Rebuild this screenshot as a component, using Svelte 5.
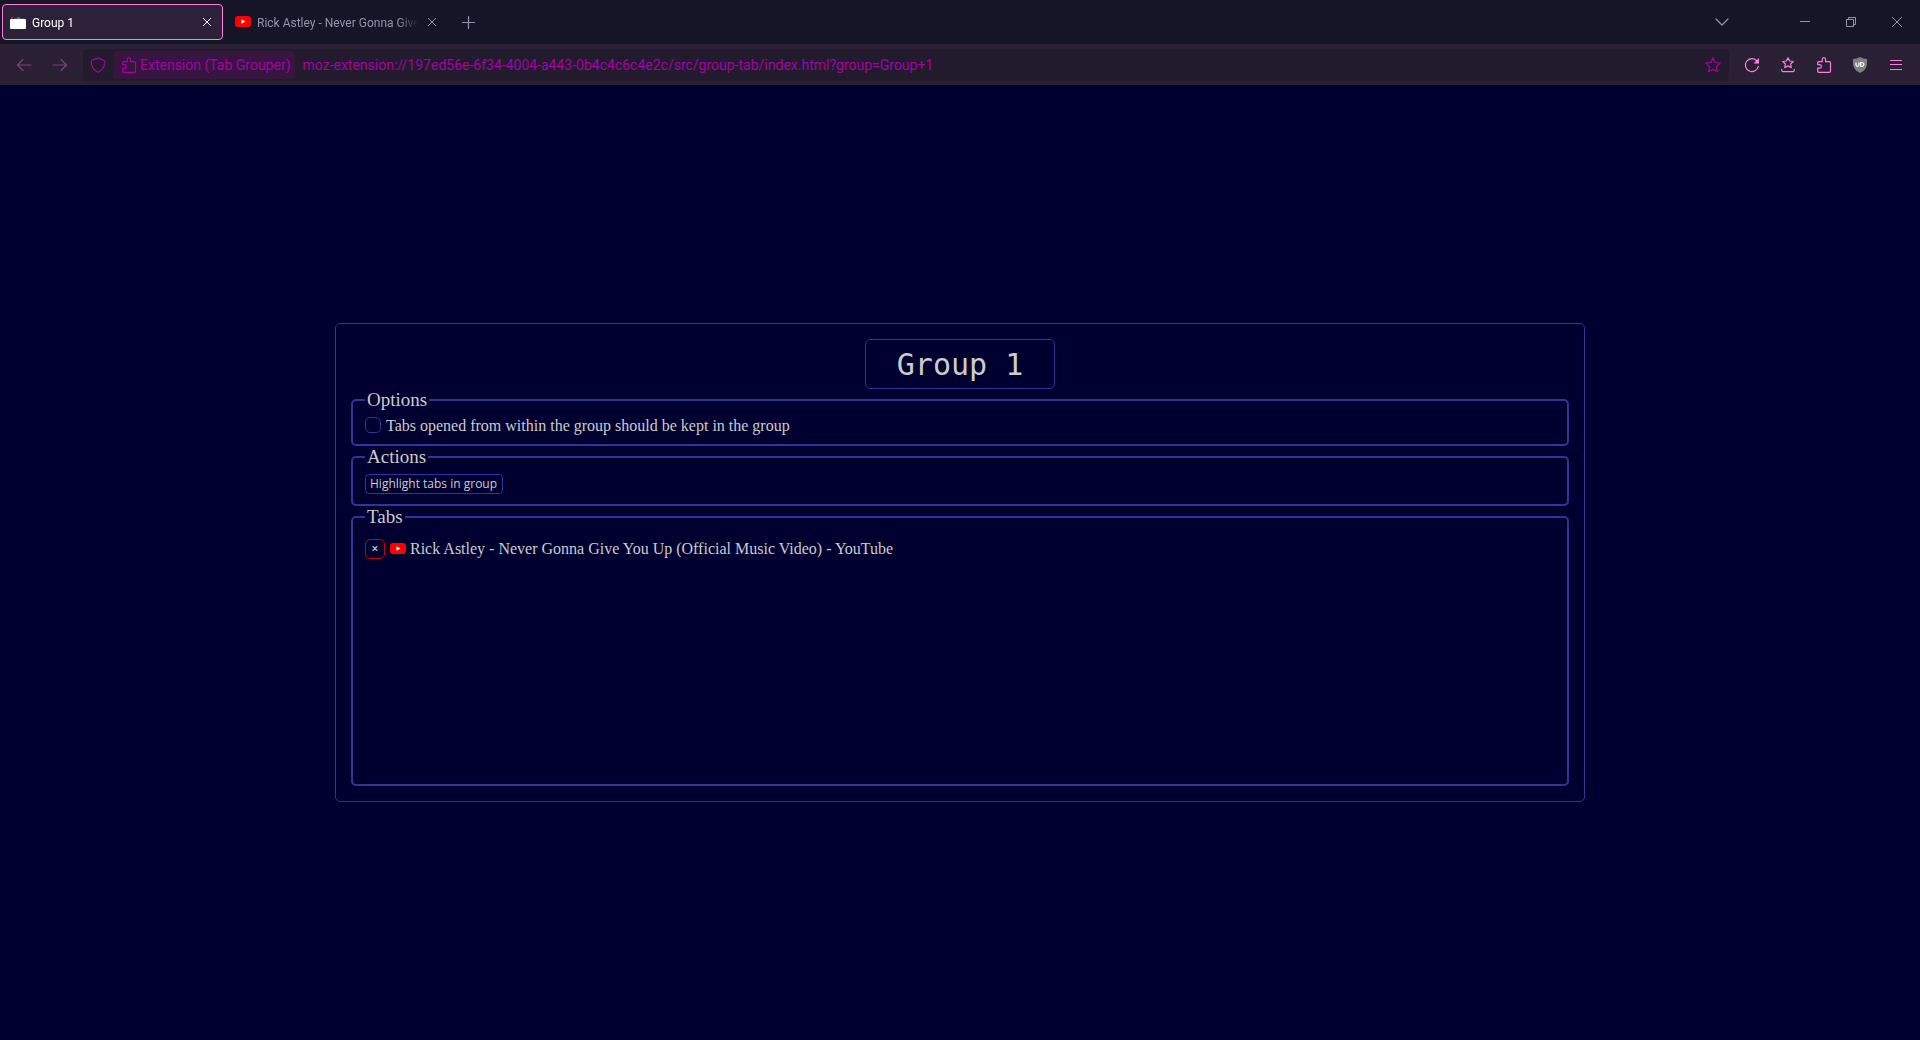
<script>
  let groupName = $state('Group 1');
  let keepOpened = $state(false);

  const browserTabs = [
    { title: 'Group 1', icon: 'folder', active: true },
    { title: 'Rick Astley - Never Gonna Give You Up', icon: 'youtube', active: false }
  ];
  const groupTabs = ['Rick Astley - Never Gonna Give You Up (Official Music Video) - YouTube'];
</script>

{#snippet youtube()}
  <svg class="icon" viewBox="0 0 16 16" aria-hidden="true">
    <rect x="0" y="2" width="16" height="11" rx="3" fill="#f00" />
    <path d="M6.5 5.2 10.5 7.5 6.5 9.8z" fill="#fff" />
  </svg>
{/snippet}

{#snippet puzzle()}
  <svg class="icon line" viewBox="0 0 16 16" aria-hidden="true">
    <path d="M1.7 11.200V14q0 1.3 1.3 1.3h10.2q1.3 0 1.3-1.3V6q0-1.3-1.3-1.3H9.6V2.600a1.7 1.9 0 0 0-3.400 0v2.100H3q-1.3 0-1.3 1.3v1.600h1.9a1.8 1.8 0 0 1 0 3.600z" />
  </svg>
{/snippet}

<div class="window">
  <header>
    <div class="tabbar">
      {#each browserTabs as tab}
        <div class="tab" class:active={tab.active}>
          {#if tab.icon === 'folder'}
            <svg class="icon" viewBox="0 0 16 16" aria-hidden="true">
              <path d="M0 3h4v3H0z" fill="#3c1424" />
              <path d="M1 3h2v2H1z" fill="#d01818" />
              <path d="M4 4h3v2H4zM10 4h5v2h-5z" fill="#3f4352" />
              <path d="M7 3h3v3H7z" fill="#1877c0" />
              <rect y="5" width="16" height="10" rx="1" fill="#fff" />
            </svg>
          {:else}
            {@render youtube()}
          {/if}
          <span class="tab-title">{tab.title}</span>
          <button class="tab-close" aria-label="Close tab">
            <svg viewBox="0 0 10 10" aria-hidden="true"><path d="M1 1l8 8M9 1 1 9" /></svg>
          </button>
        </div>
      {/each}
      <button class="tool dim" aria-label="New tab">
        <svg class="icon line" viewBox="0 0 16 16" aria-hidden="true"><path d="M8.500 2.500v12M2.500 8.500h12" /></svg>
      </button>
      <div class="spacer"></div>
      <button class="tool dim" aria-label="List all tabs">
        <svg class="icon line" viewBox="0 0 16 16" aria-hidden="true"><path d="M2 5l6 6 6-6" /></svg>
      </button>
      <div class="controls">
        <button aria-label="Minimize">
          <svg viewBox="0 0 10 10" aria-hidden="true"><path d="M0 4.5h10" /></svg>
        </button>
        <button aria-label="Restore">
          <svg viewBox="0 0 10 10" aria-hidden="true"><path d="M.5 2.5h7v7h-7zM2.5 2.5v-2h7v7h-2" /></svg>
        </button>
        <button aria-label="Close window">
          <svg viewBox="0 0 10 10" aria-hidden="true"><path d="M0 0l10 10M10 0 0 10" /></svg>
        </button>
      </div>
    </div>

    <nav class="toolbar" aria-label="Browser toolbar">
      <button class="tool faded" aria-label="Back">
        <svg class="icon line" viewBox="0 0 16 16" aria-hidden="true"><path d="M15 8H1.5M7 2.5 1.5 8 7 13.5" /></svg>
      </button>
      <button class="tool faded" aria-label="Forward">
        <svg class="icon line" viewBox="0 0 16 16" aria-hidden="true"><path d="M1 8h13.500M9 2.500 14.500 8 9 13.500" /></svg>
      </button>
      <div class="urlbar">
        <button class="shield" aria-label="Tracking protection">
          <svg class="icon line" viewBox="0 0 16 16" aria-hidden="true">
            <path d="M8 .9 14 3.200q.8.300.8 1.200C14.800 9.500 12.500 13 8 15.300 3.500 13 1.200 9.500 1.200 4.400q0-.9.8-1.200z" />
          </svg>
        </button>
        <button class="identity">
          {@render puzzle()}
          <span>Extension (Tab Grouper)</span>
        </button>
        <input
          class="address"
          aria-label="Address"
          spellcheck="false"
          value="moz-extension://197ed56e-6f34-4004-a443-0b4c4c6c4e2c/src/group-tab/index.html?group=Group+1"
        />
        <button class="tool bookmark" aria-label="Bookmark this page">
          <svg class="icon line" viewBox="0 0 16 16" aria-hidden="true">
            <path d="M8 .9l2.100 4.600 5.100.6-3.700 3.500.9 5.200L8 12.400l-4.400 2.400.9-5.200L.8 6.100l5.100-.6z" />
          </svg>
        </button>
      </div>
      <button class="tool" aria-label="Reload">
        <svg class="icon line" viewBox="0 0 16 16" aria-hidden="true">
          <path d="M14.300 9.300a6.500 6.500 0 1 1-1.500-5.500" />
          <path d="M15 1v5.500H9.500z" fill="currentColor" stroke="none" />
        </svg>
      </button>
      <button class="tool" aria-label="Bookmarks menu">
        <svg class="icon line" viewBox="0 0 16 16" aria-hidden="true">
          <path d="M8 .8l1.600 3.200 3.600.5-2.600 2.500.7 3.600L8 8.900l-3.300 1.700.7-3.600-2.600-2.500 3.600-.5z" />
          <path d="M1.700 12.300v.8q0 1.500 1.500 1.500h9.600q1.500 0 1.500-1.500v-.8" />
        </svg>
      </button>
      <button class="tool" aria-label="Extensions">{@render puzzle()}</button>
      <button class="tool" aria-label="uBlock Origin">
        <svg class="icon" viewBox="0 0 16 16" aria-hidden="true">
          <path d="M8 0q3 2 7 2v4q0 7-7 10Q1 13 1 6V2q4 0 7-2z" fill="#808080" />
          <path d="M4 5.500v2.300q0 1.500 1.500 1.500T7 7.800V5.500M8.700 5.500v3.800h.8q2.300 0 2.300-1.900T9.500 5.500z" fill="none" stroke="#fff" stroke-width="1.200" />
        </svg>
      </button>
      <button class="tool" aria-label="Application menu">
        <svg class="icon line" viewBox="0 0 16 16" aria-hidden="true"><path d="M2.500 3.500h11M2.500 7.500h11M2.500 12.500h11" /></svg>
      </button>
    </nav>
  </header>

  <main>
    <section class="panel">
      <input class="group-name" aria-label="Group name" bind:value={groupName} spellcheck="false" />

      <fieldset>
        <legend>Options</legend>
        <label class="option">
          <input type="checkbox" bind:checked={keepOpened} />
          <span>Tabs opened from within the group should be kept in the group</span>
        </label>
      </fieldset>

      <fieldset>
        <legend>Actions</legend>
        <button class="action">Highlight tabs in group</button>
      </fieldset>

      <fieldset class="tabs">
        <legend>Tabs</legend>
        <ul>
          {#each groupTabs as title}
            <li>
              <button class="remove" aria-label="Close {title}">×</button>
              {@render youtube()}
              <span>{title}</span>
            </li>
          {/each}
        </ul>
      </fieldset>
    </section>
  </main>
</div>

<style>
  :global(body) {
    margin: 0;
    background: #000030;
  }

  .window {
    display: flex;
    flex-direction: column;
    min-height: 100vh;
    color: #ccc;
    font-family: 'Liberation Serif', serif;
    font-size: 16px;
  }

  header,
  header button,
  header input {
    font-family: Roboto, 'Noto Sans', sans-serif;
  }

  button,
  input {
    box-sizing: border-box;
    margin: 0;
    padding: 0;
    border: 0;
    background: none;
    color: inherit;
  }

  svg {
    display: block;
    flex: none;
    width: 10px;
    height: 10px;
    fill: none;
    stroke: currentColor;
    stroke-width: 1;
  }

  .icon {
    width: 16px;
    height: 16px;
    stroke: none;
  }

  .line {
    stroke: currentColor;
    stroke-width: 1.2;
    stroke-linecap: round;
    stroke-linejoin: round;
  }

  .tabbar {
    display: flex;
    align-items: center;
    gap: 4px;
    height: 44px;
    padding-left: 2px;
    background: #161527;
    color: #9095ab;
  }

  .tab {
    display: flex;
    align-items: center;
    gap: 6px;
    box-sizing: border-box;
    width: 221px;
    height: 36px;
    padding: 0 7px;
    border: 1px solid transparent;
    border-radius: 4px;
    font-size: 12px;
    line-height: 18px;
  }

  .tab.active {
    border-color: #ff80dc;
    background: #2b2138;
    color: #fff;
  }

  .tab-title {
    flex: 1;
    min-width: 0;
    padding-top: 1px;
    overflow: hidden;
    white-space: nowrap;
    mask-image: linear-gradient(to left, transparent, #000 20px);
  }

  .tab-close {
    display: grid;
    place-items: center;
    width: 16px;
    height: 24px;
  }

  .tool {
    display: grid;
    flex: none;
    place-items: center;
    width: 32px;
    height: 32px;
    color: #ff80dc;
  }

  .tool.dim {
    color: #9095ab;
  }

  .tool.faded {
    color: #7d417c;
  }

  .spacer {
    flex: 1;
  }

  .controls {
    display: flex;
    margin-left: 40px;
  }

  .controls button {
    display: grid;
    place-items: center;
    width: 46px;
    height: 40px;
  }

  .toolbar {
    display: flex;
    align-items: center;
    gap: 4px;
    height: 41px;
    padding: 0 8px;
    background: #2a2036;
  }

  .urlbar {
    display: flex;
    flex: 1;
    align-items: center;
    min-width: 0;
    height: 32px;
    margin: 0 3px;
    border-radius: 4px;
    background: #221a2d;
    color: #a800a8;
  }

  .shield {
    display: grid;
    place-items: center;
    width: 30px;
    height: 28px;
  }

  .identity {
    display: flex;
    flex: none;
    align-items: center;
    gap: 3px;
    height: 28px;
    padding: 0 4px 0 8px;
    border-radius: 4px;
    background: #381440;
    font-size: 14px;
    white-space: nowrap;
  }

  .address {
    flex: 1;
    min-width: 0;
    padding: 0 8px;
    font-size: 14px;
    outline: none;
  }

  .bookmark {
    color: #a800a8;
  }

  main {
    display: grid;
    flex: 1;
    place-items: center;
  }

  .panel {
    display: flex;
    flex-direction: column;
    box-sizing: border-box;
    width: 100%;
    max-width: 1250px;
    padding: 15px;
    border: 1px solid #339;
    border-radius: 5px;
  }

  .group-name {
    align-self: center;
    width: 190px;
    height: 50px;
    border: 1px solid #339;
    border-radius: 5px;
    font-family: 'DejaVu Sans Mono', monospace;
    font-size: 30px;
    text-align: center;
    outline: none;
  }

  fieldset {
    min-width: 0;
    margin: 0;
    padding: 6px 12px 10px;
    border: 2px solid #339;
    border-radius: 5px;
  }

  legend {
    padding: 0 2px;
    font-size: 19px;
    line-height: 22px;
  }

  .option {
    display: flex;
    align-items: flex-start;
    gap: 5px;
    line-height: 17px;
  }

  .option input {
    width: 16px;
    height: 16px;
    appearance: none;
    border: 1px solid #339;
    border-radius: 5px;
  }

  .option input:checked {
    background: #339;
  }

  .action {
    display: block;
    height: 20px;
    padding: 0 5px 0 4px;
    border: 1px solid #339;
    border-radius: 4px;
    font-family: 'Open Sans', 'Noto Sans', sans-serif;
    font-size: 12px;
    line-height: 18px;
  }

  .tabs {
    padding: 11px 12px;
  }

  ul {
    min-height: 234px;
    margin: 0;
    padding: 0;
    list-style: none;
  }

  li {
    display: flex;
    align-items: center;
    gap: 4px;
    line-height: 20px;
  }

  .remove {
    width: 20px;
    height: 20px;
    margin-right: 1px;
    border: 1px solid #c00;
    border-radius: 5px;
    font-family: 'Open Sans', 'Noto Sans', sans-serif;
    font-size: 12px;
    font-weight: 600;
    line-height: 18px;
  }
</style>
